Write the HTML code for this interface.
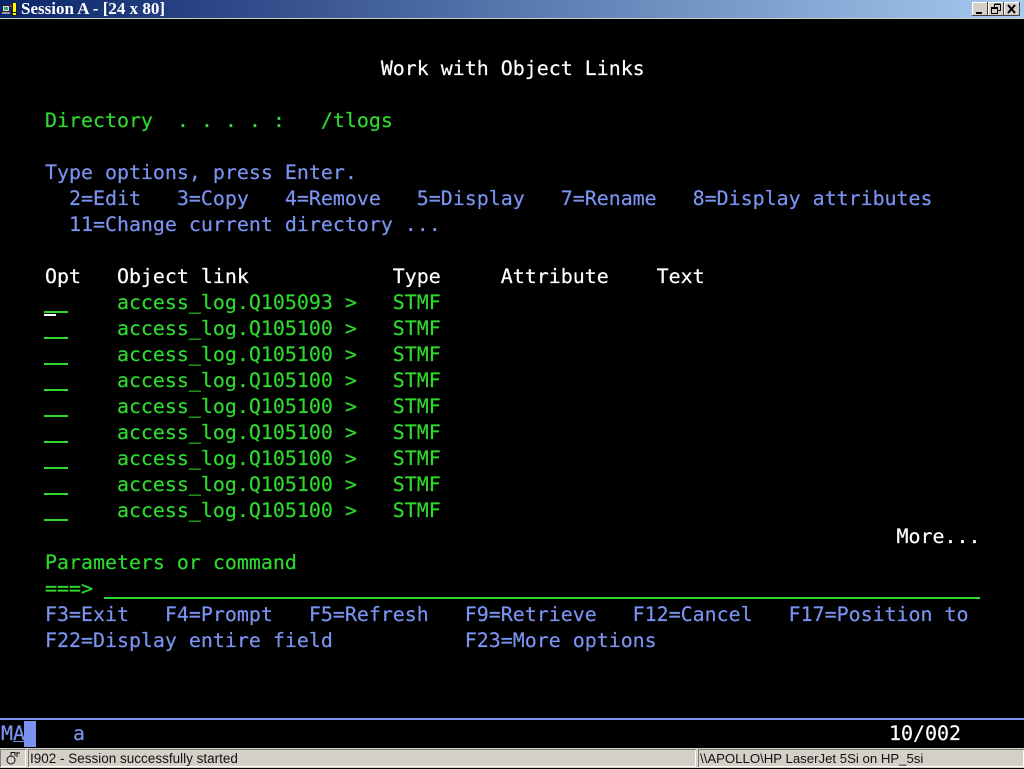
<!DOCTYPE html>
<html><head><meta charset="utf-8"><style>
html,body{margin:0;padding:0;background:#000;width:1024px;height:768px;overflow:hidden}
#t{position:absolute;left:0;top:0;width:1024px;height:18px;background:linear-gradient(90deg,#0a246a,#a6caf0);border-bottom:1px solid #d4d0c8}
#t span{position:absolute;left:21px;top:0;font:bold 17px/18px "Liberation Serif",serif;color:#fff;white-space:pre}
.b{position:absolute;top:2px;width:16px;height:14px;background:#d4d0c8;box-shadow:inset -1px -1px #404040,inset 1px 1px #fff}
.l{position:absolute;left:9px;margin:0;font:19.93px/26px "DejaVu Sans Mono",monospace;white-space:pre;transform:translateY(1px);-webkit-text-stroke:.2px}
.w{color:#fff}.g{color:#2fd82f}.u{color:#7b93f0}
.r{position:absolute;height:2px}
#s{position:absolute;left:0;top:748px;width:1024px;height:20px;background:#d4d0c8;font:13.5px/20px "Liberation Sans",sans-serif;color:#111}
#s div{position:absolute;top:1px;height:18px;box-shadow:inset 1px 1px #808080,inset -1px -1px #fff;line-height:20px;padding-left:2px;box-sizing:border-box;white-space:pre}
</style></head><body>
<div id="t"><svg width="20" height="19" style="position:absolute;left:0;top:0"><rect x="2.5" y="5.5" width="7" height="6" fill="#ddd" stroke="#222"/><rect x="4" y="7" width="4" height="3" fill="#2a8"/><rect x="2" y="12" width="8" height="2" fill="#999"/><rect x="12.5" y="2.5" width="4" height="13" fill="#ff0" stroke="#222" stroke-width="1"/><rect x="13" y="12" width="3" height="1" fill="#222"/><rect x="10" y="5" width="2" height="2" fill="#d22"/></svg><span>Session A - [24 x 80]</span>
<div class="b" style="left:972px"><div style="position:absolute;left:4px;top:10px;width:6px;height:2px;background:#000"></div></div>
<div class="b" style="left:988px"><svg width="16" height="14" style="position:absolute;left:0;top:0" fill="none" stroke="#000"><path d="M6.5 5V2.5H12.5V8.5H10"/><path d="M6.5 2H12.5" stroke-width="1"/><rect x="3.5" y="5.5" width="6" height="6"/><path d="M3.5 6.5H9.5"/></svg></div>
<div class="b" style="left:1004px"><svg width="16" height="14" style="position:absolute;left:0;top:0" fill="none" stroke="#000" stroke-width="2"><path d="M4 3L11 11M11 3L4 11"/></svg></div>
</div>
<pre class="l w" style="top:55px">                               Work with Object Links</pre>
<pre class="l g" style="top:107px">   Directory  . . . . :   /tlogs</pre>
<pre class="l u" style="top:159px">   Type options, press Enter.</pre>
<pre class="l u" style="top:185px">     2=Edit   3=Copy   4=Remove   5=Display   7=Rename   8=Display attributes</pre>
<pre class="l u" style="top:211px">     11=Change current directory ...</pre>
<pre class="l w" style="top:263px">   Opt   Object link            Type     Attribute    Text</pre>
<pre class="l g" style="top:289px">         access_log.Q105093 &gt;   STMF</pre>
<pre class="l g" style="top:315px">         access_log.Q105100 &gt;   STMF</pre>
<pre class="l g" style="top:341px">         access_log.Q105100 &gt;   STMF</pre>
<pre class="l g" style="top:367px">         access_log.Q105100 &gt;   STMF</pre>
<pre class="l g" style="top:393px">         access_log.Q105100 &gt;   STMF</pre>
<pre class="l g" style="top:419px">         access_log.Q105100 &gt;   STMF</pre>
<pre class="l g" style="top:445px">         access_log.Q105100 &gt;   STMF</pre>
<pre class="l g" style="top:471px">         access_log.Q105100 &gt;   STMF</pre>
<pre class="l g" style="top:497px">         access_log.Q105100 &gt;   STMF</pre>
<div class="r" style="left:44px;top:311px;width:24px;background:#2fd82f"></div>
<div class="r" style="left:44px;top:314px;width:12px;background:#fff"></div>
<div class="r" style="left:44px;top:337px;width:24px;background:#2fd82f"></div>
<div class="r" style="left:44px;top:363px;width:24px;background:#2fd82f"></div>
<div class="r" style="left:44px;top:389px;width:24px;background:#2fd82f"></div>
<div class="r" style="left:44px;top:415px;width:24px;background:#2fd82f"></div>
<div class="r" style="left:44px;top:441px;width:24px;background:#2fd82f"></div>
<div class="r" style="left:44px;top:467px;width:24px;background:#2fd82f"></div>
<div class="r" style="left:44px;top:493px;width:24px;background:#2fd82f"></div>
<div class="r" style="left:44px;top:519px;width:24px;background:#2fd82f"></div>
<pre class="l w" style="top:523px">                                                                          More...</pre>
<pre class="l g" style="top:549px">   Parameters or command</pre>
<pre class="l g" style="top:575px">   ===&gt;</pre>
<div class="r" style="left:104px;top:597px;width:876px;background:#2fd82f"></div>
<pre class="l u" style="top:601px">   F3=Exit   F4=Prompt   F5=Refresh   F9=Retrieve   F12=Cancel   F17=Position to</pre>
<pre class="l u" style="top:627px">   F22=Display entire field           F23=More options</pre>
<div class="r" style="left:0;top:718px;width:1024px;background:#7b93f0"></div>
<pre class="l u" style="left:1px;top:720px">MA</pre>
<div class="r" style="left:13px;top:741px;width:11px;height:1px;background:#7b93f0"></div>
<div style="position:absolute;left:24px;top:721px;width:12px;height:26px;background:#7b93f0"></div>
<pre class="l u" style="left:73px;top:720px">a</pre>
<pre class="l w" style="left:889px;top:720px">10/002</pre>
<div id="s">
<div style="left:0;width:26px"><svg width="22" height="16" style="position:absolute;left:3px;top:1px" fill="none" stroke="#111"><circle cx="8" cy="10" r="4"/><path d="M8 6V2.5H12V6M14 2V7M14 3H17"/></svg></div>
<div style="left:28px;width:668px">I902 - Session successfully started</div>
<div style="left:698px;width:326px;font-size:13.2px">\\APOLLO\HP LaserJet 5Si on HP_5si</div>
</div>
</body></html>
